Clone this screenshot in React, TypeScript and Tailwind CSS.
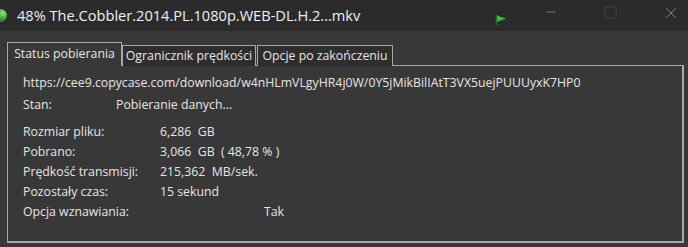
import { X, Minus, Square } from "lucide-react";

const ROWS: { label: string; value: string; labelW: string }[] = [
  { label: "Rozmiar pliku:", value: "6,286  GB", labelW: "w-[137px]" },
  { label: "Pobrano:", value: "3,066  GB  ( 48,78 % )", labelW: "w-[137px]" },
  { label: "Prędkość transmisji:", value: "215,362  MB/sek.", labelW: "w-[137px]" },
  { label: "Pozostały czas:", value: "15 sekund", labelW: "w-[137px]" },
  { label: "Opcja wznawiania:", value: "Tak", labelW: "w-[241px]" },
];

export default function App() {
  return (
    <div
      className="w-[688px] h-[247px] bg-[#383838] text-[#e6e6e6] flex flex-col overflow-hidden"
      style={{ fontFamily: '"Open Sans", "Noto Sans", sans-serif' }}
    >
      {/* title bar */}
      <div className="h-[31px] bg-[#2b2b2b] flex items-center relative shrink-0">
        <div className="absolute left-[-6px] top-[9px] w-[13px] h-[13px] rounded-full bg-[radial-gradient(circle_at_70%_30%,#9be07a,#2f8f3a_55%,#1d4f9a)]" />
        <span className="pl-[17px] text-[14.6px] text-[#f0f0f0] whitespace-nowrap">
          48% The.Cobbler.2014.PL.1080p.WEB-DL.H.2...mkv
        </span>
        <div className="flex-1" />
        <svg width="14" height="11" viewBox="0 0 14 11" className="mt-[9px] mr-[36px]">
          <path d="M2.5 0 V10" stroke="#1f6b1f" strokeWidth="1.5" />
          <path d="M3 0.5 L12 3.5 L3 7 Z" fill="#2fc12f" />
          <path d="M0 10.5 H9" stroke="#402a40" strokeWidth="1" />
        </svg>
        <Minus className="w-[14px] h-[14px] text-[#9a9a9a] mt-[-8px] mr-[45px]" strokeWidth={1.2} />
        <Square className="w-[15px] h-[15px] text-[#4a4a4a] mt-[-6px] mr-[44px]" strokeWidth={1.2} />
        <X className="w-[18px] h-[18px] text-[#8a8a8a] mt-[-6px] mr-[8px]" strokeWidth={1.2} />
      </div>

      {/* tabs + panel */}
      <div className="pl-[7px] pt-[11px] text-[12.3px] whitespace-nowrap">
        <div className="flex items-end h-[24px] relative z-10">
          <div className="h-[24px] w-[115px] border border-b-0 border-[#a8a8a8] bg-[#383838] flex items-center justify-center pb-[1px] leading-none">
            Status pobierania
          </div>
          <div className="h-[21px] w-[134px] border border-b-0 border-[#a8a8a8] bg-[#2e2e2e] flex items-center justify-center leading-none">
            Ogranicznik prędkości
          </div>
          <div className="h-[21px] w-[136px] ml-[1px] border border-b-0 border-[#a8a8a8] bg-[#2e2e2e] flex items-center justify-center leading-none">
            Opcje po zakończeniu
          </div>
        </div>
        <div className="w-[677px] h-[178px] -mt-[1px] border border-[#a8a8a8] border-r-2 border-b-2 pl-[15px] pt-[8px]">
          <div className="h-[18px] flex items-center">
            https://cee9.copycase.com/download/w4nHLmVLgyHR4j0W/0Y5jMikBilIAtT3VX5uejPUUUyxK7HP0
          </div>
          <div className="h-[18px] mt-[4px] flex items-center">
            <span className="w-[93px]">Stan:</span>
            <span>Pobieranie danych...</span>
          </div>
          <div className="mt-[8px]">
            {ROWS.map((r) => (
              <div key={r.label} className="h-[20px] flex items-center whitespace-pre">
                <span className={`${r.labelW} shrink-0`}>{r.label}</span>
                <span>{r.value}</span>
              </div>
            ))}
          </div>
        </div>
      </div>
    </div>
  );
}
